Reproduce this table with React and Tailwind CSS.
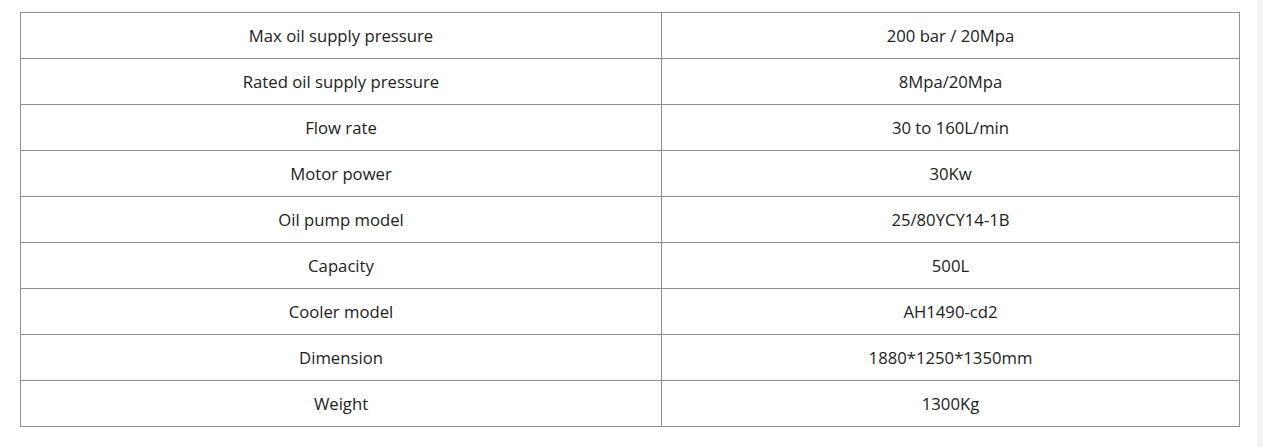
const specs = [
  ['Max oil supply pressure', '200 bar / 20Mpa'],
  ['Rated oil supply pressure', '8Mpa/20Mpa'],
  ['Flow rate', '30 to 160L/min'],
  ['Motor power', '30Kw'],
  ['Oil pump model', '25/80YCY14-1B'],
  ['Capacity', '500L'],
  ['Cooler model', 'AH1490-cd2'],
  ['Dimension', '1880*1250*1350mm'],
  ['Weight', '1300Kg'],
];

function App() {
  return (
    <div className="flex min-h-[447px] bg-white" style={{ fontFamily: '"Open Sans", "Noto Sans", sans-serif' }}>
      <div className="flex-1 pl-[20px] pt-[12px]">
        <div className="grid w-[1220px] grid-cols-[641px_578px] border-l border-t border-[#8f8f95] text-[16.7px] text-[#222]">
          {specs.map(([label, value]) => (
            <div key={label} className="contents">
              <div className="flex h-[46px] items-center justify-center border-b border-r border-[#8f8f95]">{label}</div>
              <div className="flex h-[46px] items-center justify-center border-b border-r border-[#8f8f95]">{value}</div>
            </div>
          ))}
        </div>
      </div>
      <div className="w-[6px] bg-[#f3f3f3]" />
    </div>
  );
}

export default App;
